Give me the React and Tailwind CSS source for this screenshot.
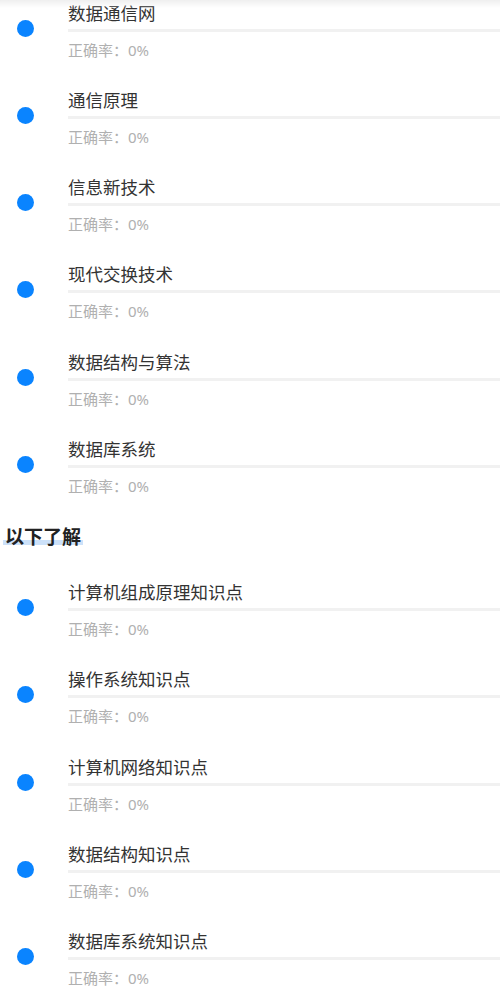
import React from "react";

const mustKnow = ["数据通信网", "通信原理", "信息新技术", "现代交换技术", "数据结构与算法", "数据库系统"];
const niceToKnow = ["计算机组成原理知识点", "操作系统知识点", "计算机网络知识点", "数据结构知识点", "数据库系统知识点"];

function TopicRow({ title, rate = 0 }) {
  return (
    <div className="flex h-[87.25px]">
      <div className="w-[68px] shrink-0">
        <div className="ml-[17px] mt-[18px] h-[17px] w-[17px] rounded-full bg-[#0a84ff]" />
      </div>
      <div className="flex-1 min-w-0">
        <p className="text-[17.5px] leading-[22px] text-[#333]">{title}</p>
        <div className="mt-[5px] h-[3px] bg-[#f1f1f1]" />
        <p className="mt-[8px] text-[15px] leading-[20px] text-[#b0b0b0]">正确率：{rate}%</p>
      </div>
    </div>
  );
}

export default function App() {
  return (
    <div
      className="relative min-h-[995px] overflow-hidden bg-white"
      style={{ fontFamily: '"Noto Sans", "Noto Sans CJK SC", sans-serif' }}
    >
      <div className="pointer-events-none absolute inset-x-0 top-0 h-[8px] bg-gradient-to-b from-[#efefef] to-white/0" />
      <div className="pt-[1.5px]">
        {mustKnow.map((t) => (
          <TopicRow key={t} title={t} />
        ))}
      </div>
      <div className="flex h-[24px] pl-[5px]">
        <h2 className="relative text-[19px] font-bold leading-[24px] text-[#222]">
          <span className="absolute bottom-[4px] left-[-2px] right-[-2px] h-[5px] bg-[#cce1f9]" />
          <span className="relative">以下了解</span>
        </h2>
      </div>
      <div className="pt-[32px]">
        {niceToKnow.map((t) => (
          <TopicRow key={t} title={t} />
        ))}
      </div>
    </div>
  );
}
